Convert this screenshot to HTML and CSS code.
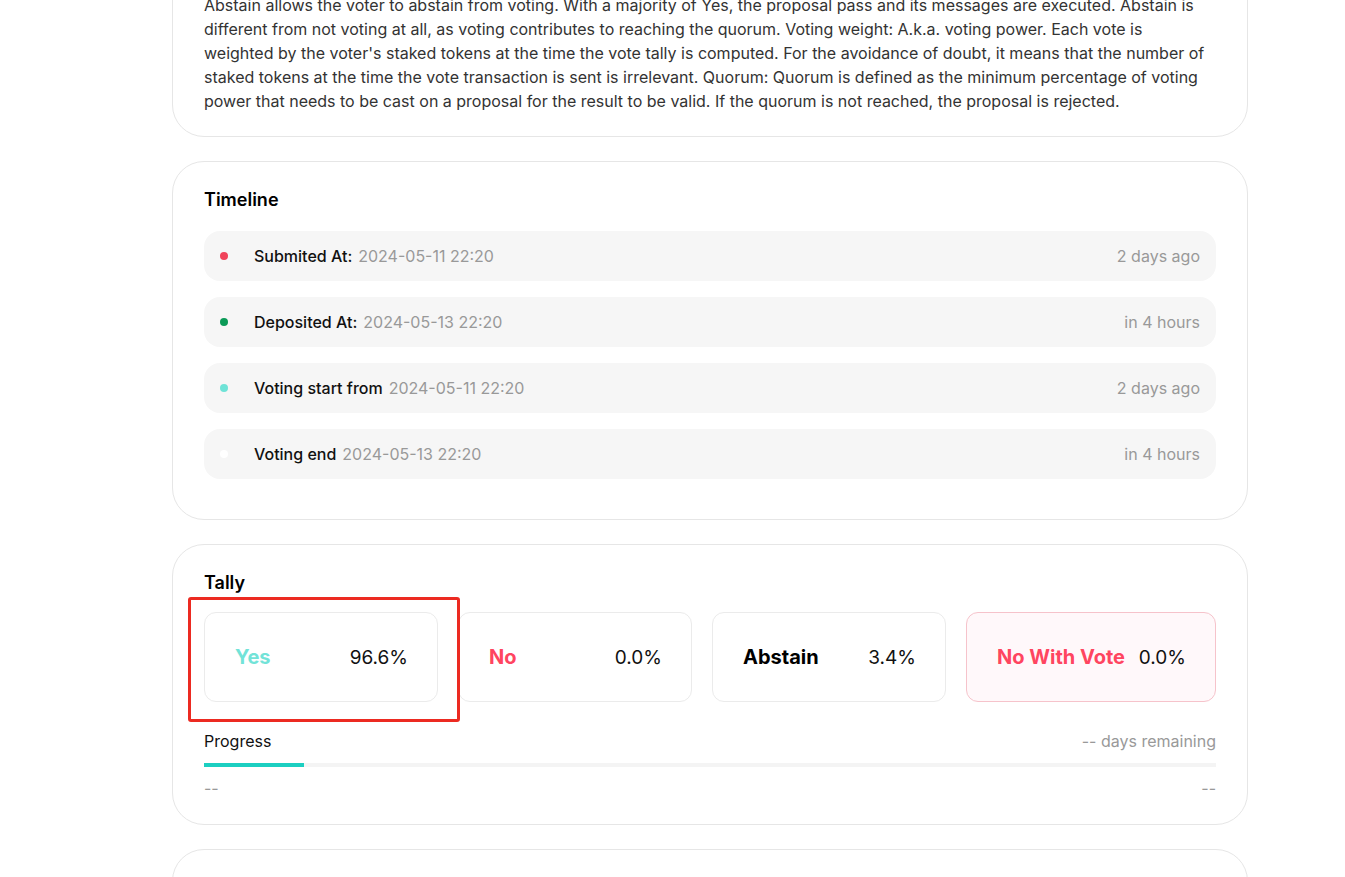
FILE: index.html
```html
<!DOCTYPE html>
<html lang="en">
<head>
    <meta charset="UTF-8">
    <meta name="viewport" content="width=device-width, initial-scale=1.0">
    <title>Proposal</title>
    <link rel="stylesheet" href="styles.css">
</head>
<body>
    <div class="main">
        <div class="card desc">
            <h3 class="title">Description</h3>
            <p class="text">Abstain allows the voter to abstain from voting. With a majority of Yes, the proposal pass and its messages are executed. Abstain is different from not voting at all, as voting contributes to reaching the quorum. Voting weight: A.k.a. voting power. Each vote is weighted by the voter's staked tokens at the time the vote tally is computed. For the avoidance of doubt, it means that the number of staked tokens at the time the vote transaction is sent is irrelevant. Quorum: Quorum is defined as the minimum percentage of voting power that needs to be cast on a proposal for the result to be valid. If the quorum is not reached, the proposal is rejected.</p>
        </div>

        <div class="card timeline">
            <h3 class="title">Timeline</h3>
            <div class="row">
                <span class="dot red"></span>
                <span class="label">Submited At:</span>
                <span class="date">2024-05-11 22:20</span>
                <span class="ago">2 days ago</span>
            </div>
            <div class="row">
                <span class="dot green"></span>
                <span class="label">Deposited At:</span>
                <span class="date">2024-05-13 22:20</span>
                <span class="ago">in 4 hours</span>
            </div>
            <div class="row">
                <span class="dot teal"></span>
                <span class="label">Voting start from</span>
                <span class="date">2024-05-11 22:20</span>
                <span class="ago">2 days ago</span>
            </div>
            <div class="row">
                <span class="dot white"></span>
                <span class="label">Voting end</span>
                <span class="date">2024-05-13 22:20</span>
                <span class="ago">in 4 hours</span>
            </div>
        </div>

        <div class="card tally">
            <h3 class="title">Tally</h3>
            <div class="votes">
                <div class="vote">
                    <span class="name yes">Yes</span>
                    <span class="pct">96.6%</span>
                </div>
                <div class="vote">
                    <span class="name no">No</span>
                    <span class="pct">0.0%</span>
                </div>
                <div class="vote">
                    <span class="name">Abstain</span>
                    <span class="pct">3.4%</span>
                </div>
                <div class="vote veto">
                    <span class="name no">No With Vote</span>
                    <span class="pct">0.0%</span>
                </div>
            </div>
            <div class="progress-head">
                <span>Progress</span>
                <span class="muted">-- days remaining</span>
            </div>
            <div class="bar"><div class="fill" style="width: 100px"></div></div>
            <div class="progress-foot">
                <span class="muted">--</span>
                <span class="muted">--</span>
            </div>
            <div class="highlight"></div>
        </div>

        <div class="card next"></div>
    </div>
</body>
</html>
```

FILE: styles.css
```css
*{
    box-sizing: border-box;
}
body{
    margin: 0;
    background: #fff;
    font-family: Inter, "Noto Sans", sans-serif;
    color: #111;
}
.main{
    width: 1076px;
    margin-left: 172px;
    margin-top: -77px;
}
.card{
    position: relative;
    border: 1px solid #e6e6e6;
    border-radius: 32px;
    padding: 24px 31px;
    margin-bottom: 24px;
    background: #fff;
}
.title{
    margin: 0 0 17px;
    font-size: 18px;
    line-height: 28px;
    font-weight: 600;
    color: #000;
}
.desc{
    padding-bottom: 23px;
}
.text{
    margin: 0;
    font-size: 16px;
    line-height: 24px;
    color: #333;
}
.timeline{
    padding-bottom: 40px;
}
.row{
    display: flex;
    align-items: center;
    height: 50px;
    padding: 0 16px;
    margin-bottom: 16px;
    background: #f6f6f6;
    border-radius: 16px;
    font-size: 16px;
}
.row:last-child{
    margin-bottom: 0;
}
.dot{
    width: 8px;
    height: 8px;
    border-radius: 50%;
    margin-right: 26px;
}
.red{ background: #f0435a; }
.green{ background: #0b9a57; }
.teal{ background: #6fe3d7; }
.white{ background: #fff; }
.label{
    font-weight: 500;
    color: #111;
    margin-right: 6px;
}
.date{
    color: #999;
}
.ago{
    margin-left: auto;
    color: #999;
}
.tally .title{
    margin-bottom: 15px;
}
.votes{
    display: grid;
    grid-template-columns: 234px 234px 234px 1fr;
    gap: 20px;
}
.vote{
    height: 90px;
    display: flex;
    align-items: center;
    justify-content: space-between;
    padding: 0 29px 0 30px;
    border: 1px solid #ebebeb;
    border-radius: 12px;
}
.name{
    font-size: 20px;
    font-weight: 700;
    color: #000;
}
.name.yes{ color: #72e3d8; }
.name.no{ color: #ff4560; }
.pct{
    font-size: 19px;
    color: #111;
}
.vote.veto{
    background: #fff8fa;
    border-color: #f6c3cb;
}
.progress-head, .progress-foot{
    display: flex;
    justify-content: space-between;
    font-size: 16px;
    line-height: 24px;
}
.progress-head{
    margin-top: 27px;
}
.muted{
    color: #999;
}
.bar{
    height: 4px;
    margin-top: 10px;
    background: #f4f4f4;
}
.fill{
    height: 4px;
    background: #1ccfc1;
}
.progress-foot{
    margin-top: 9px;
}
.highlight{
    position: absolute;
    left: 15px;
    top: 52px;
    width: 272px;
    height: 125px;
    border: 3px solid #ec2a21;
    border-radius: 3px;
}
.next{
    height: 200px;
}
```
